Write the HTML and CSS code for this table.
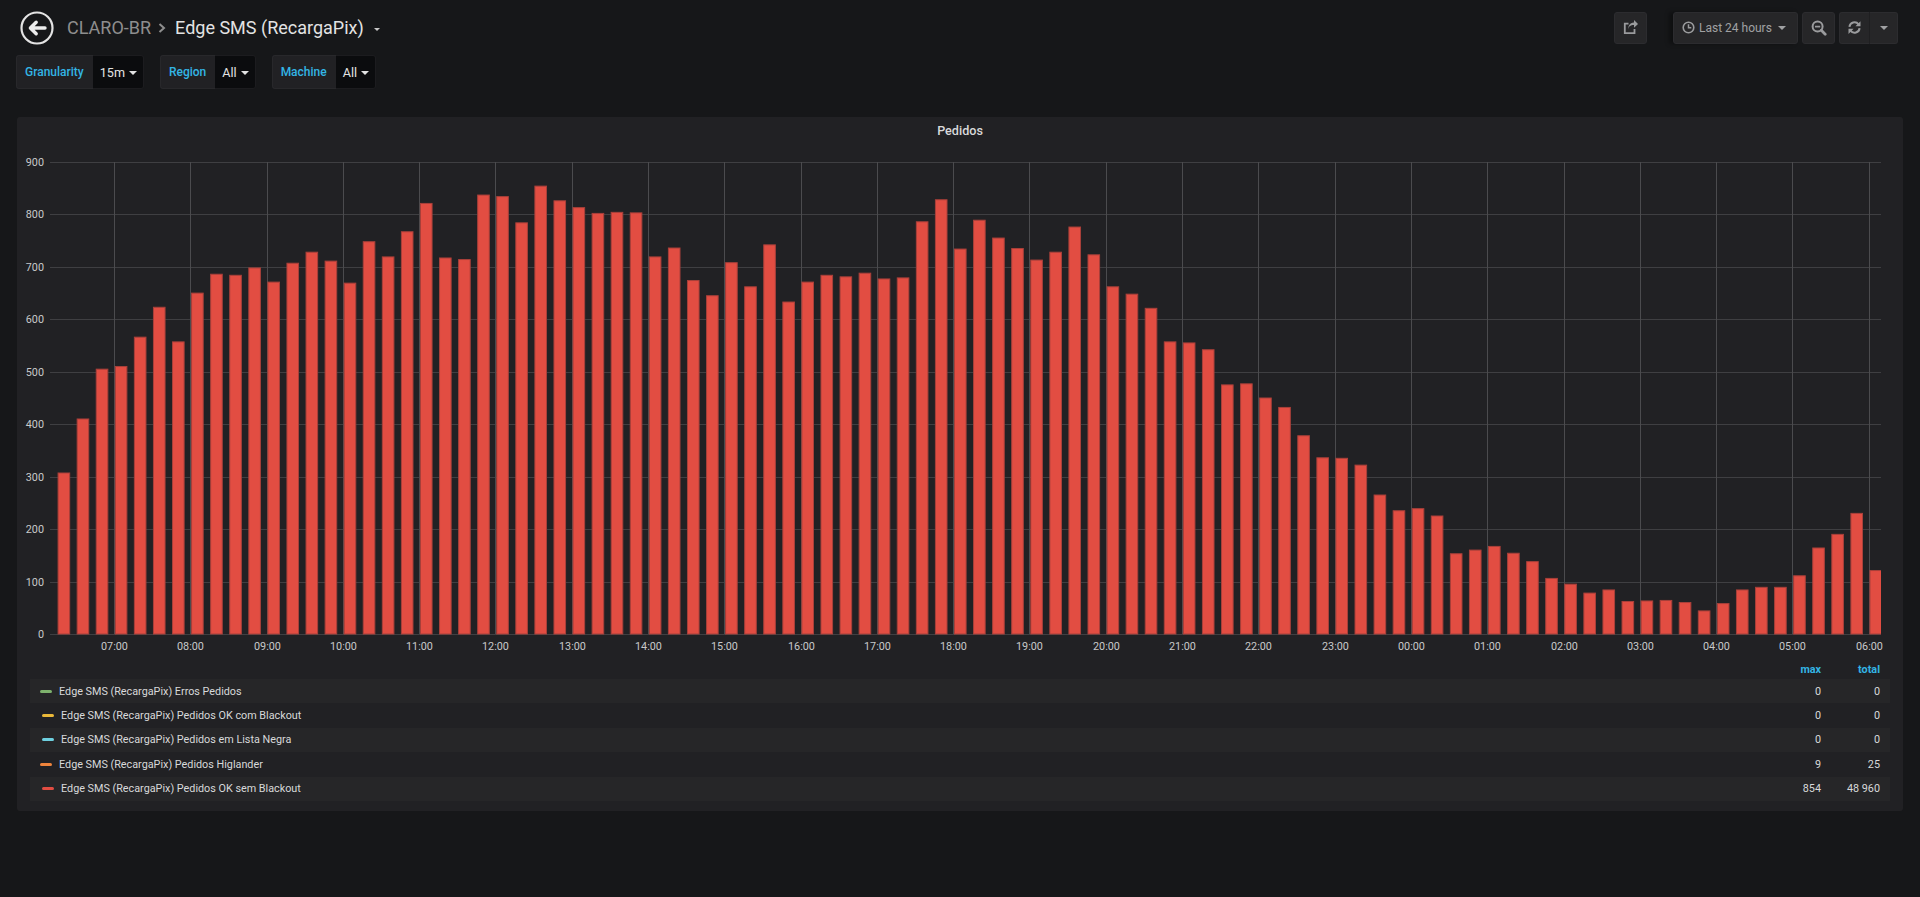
FILE: index.html
```html
<!DOCTYPE html>
<html lang="pt">
<head>
<meta charset="utf-8">
<title>Edge SMS (RecargaPix) - Grafana</title>
<link rel="stylesheet" href="styles.css">
</head>
<body>
<div class="navbar">
  <div class="nav-left">
    <a class="back-btn" href="#">
      <svg width="34" height="34" viewBox="0 0 34 34"><circle cx="17" cy="17" r="15.5" fill="none" stroke="#e3e3e3" stroke-width="2.2"/><path d="M25 17H10.8M16.2 11.2L10.4 17L16.2 22.8" fill="none" stroke="#ececec" stroke-width="3.4" stroke-linecap="round" stroke-linejoin="round"/></svg>
    </a>
    <span class="crumb">CLARO-BR</span>
    <svg class="chev" width="8" height="10" viewBox="0 0 8 10"><path d="M1.5 1L6 5L1.5 9" fill="none" stroke="#8e8e8e" stroke-width="2"/></svg>
    <span class="dash-title">Edge SMS (RecargaPix)</span>
    <span class="caret title-caret"></span>
  </div>
  <div class="nav-right">
    <button class="nbtn icon-btn share">
      <svg width="16" height="15" viewBox="0 0 16 15"><path d="M11.5 9V13.2H1.8V3.6H5.5" fill="none" stroke="#9a9b9d" stroke-width="1.8"/><path d="M5 10.5C5 6.5 7.5 5 11 5V7.8L15 3.9L11 0V2.6C6.5 2.6 5 6.5 5 10.5Z" fill="#9a9b9d"/></svg>
    </button>
    <button class="nbtn timepicker">
      <svg width="13" height="13" viewBox="0 0 13 13"><circle cx="6.5" cy="6.5" r="5.3" fill="none" stroke="#9a9b9d" stroke-width="1.6"/><path d="M6.5 3.3V6.8H9.3" fill="none" stroke="#9a9b9d" stroke-width="1.5"/></svg>
      <span class="tp-text">Last 24 hours</span>
      <span class="caret"></span>
    </button>
    <button class="nbtn icon-btn">
      <svg width="16" height="16" viewBox="0 0 16 16"><circle cx="6.6" cy="6.6" r="5" fill="none" stroke="#9a9b9d" stroke-width="2"/><path d="M10.3 10.3L14.2 14.2" stroke="#9a9b9d" stroke-width="2.8" stroke-linecap="round"/><path d="M4 6.6H9.2" stroke="#9a9b9d" stroke-width="1.7"/></svg>
    </button>
    <div class="btn-group">
      <button class="nbtn refresh">
        <svg width="15" height="15" viewBox="0 0 16 16"><path d="M2.6 7.4A5.4 5.4 0 0 1 12.3 4.6" fill="none" stroke="#9a9b9d" stroke-width="2.1"/><path d="M14.4 1.2V6.6H9Z" fill="#9a9b9d"/><path d="M13.4 8.6A5.4 5.4 0 0 1 3.7 11.4" fill="none" stroke="#9a9b9d" stroke-width="2.1"/><path d="M1.6 14.8V9.4H7Z" fill="#9a9b9d"/></svg>
      </button>
      <button class="nbtn caret-btn"><span class="caret"></span></button>
    </div>
  </div>
</div>

<div class="submenu">
  <div class="var"><span class="var-label">Granularity</span><span class="var-value"><span>15m</span><span class="caret"></span></span></div>
  <div class="var"><span class="var-label">Region</span><span class="var-value"><span>All</span><span class="caret"></span></span></div>
  <div class="var"><span class="var-label">Machine</span><span class="var-value"><span>All</span><span class="caret"></span></span></div>
</div>

<div class="panel">
  <div class="panel-title">Pedidos</div>
  <svg id="chart" class="chart" width="1886" height="515" viewBox="0 0 1886 515"></svg>
  <div class="legend">
    <div class="legend-head"><span></span><span class="lh">max</span><span class="lh">total</span></div>
    <div class="legend-row odd"><div class="series"><i class="swatch green"></i>Edge SMS (RecargaPix) Erros Pedidos</div><div class="val">0</div><div class="val">0</div></div>
    <div class="legend-row shifted"><div class="series"><i class="swatch yellow"></i>Edge SMS (RecargaPix) Pedidos OK com Blackout</div><div class="val">0</div><div class="val">0</div></div>
    <div class="legend-row odd shifted"><div class="series"><i class="swatch cyan"></i>Edge SMS (RecargaPix) Pedidos em Lista Negra</div><div class="val">0</div><div class="val">0</div></div>
    <div class="legend-row"><div class="series"><i class="swatch orange"></i>Edge SMS (RecargaPix) Pedidos Higlander</div><div class="val">9</div><div class="val">25</div></div>
    <div class="legend-row odd shifted"><div class="series"><i class="swatch red"></i>Edge SMS (RecargaPix) Pedidos OK sem Blackout</div><div class="val">854</div><div class="val">48 960</div></div>
  </div>
</div>
<script src="script.js"></script>
</body>
</html>
```

FILE: styles.css
```css
* { box-sizing: border-box; }
html, body { margin: 0; padding: 0; }
body {
  background: #161719;
  color: #d8d9da;
  font-family: Roboto, "Helvetica Neue", Arial, sans-serif;
  width: 1920px;
  height: 897px;
  overflow: hidden;
}
.navbar {
  height: 55px;
  display: flex;
  align-items: center;
  justify-content: space-between;
  padding: 0 22px 0 20px;
}
.nav-left { display: flex; align-items: center; }
.back-btn { display: flex; width: 34px; height: 34px; margin-right: 13px; }
.back-btn svg { display: block; }
.crumb { font-size: 18px; color: #8e8e8e; line-height: 24px; }
.chev { margin: 1px 9px 0 7px; display: block; }
.dash-title { font-size: 18px; color: #e3e3e3; line-height: 24px; }
.caret {
  display: inline-block;
  width: 0; height: 0;
  border-top: 4px solid currentColor;
  border-left: 4px solid transparent;
  border-right: 4px solid transparent;
}
.title-caret { color: #c8c8c8; margin: 4px 0 0 10px; border-top-width: 3px; border-left-width: 3.5px; border-right-width: 3.5px; }
.nav-right { display: flex; align-items: center; }
.nbtn {
  height: 32px;
  background: #262628;
  border: 1px solid #2c2c2f;
  border-radius: 3px;
  color: #9a9b9d;
  font-family: inherit;
  display: flex;
  align-items: center;
  justify-content: center;
  padding: 0;
  cursor: pointer;
}
.nbtn svg { display: block; }
.icon-btn { width: 33px; }
.share { margin-right: 26px; }
.timepicker {
  width: 125px;
  padding: 0 9px 0 8px;
  justify-content: flex-start;
  box-shadow: -4px 0 4px rgba(0, 0, 0, 0.35);
  margin-right: 4px;
}
.tp-text { font-size: 12px; margin: 0 6px 0 4px; color: #a0a1a3; }
.timepicker .caret { color: #a0a1a3; }
.timepicker + .icon-btn { margin-right: 4px; }
.btn-group { display: flex; }
.refresh { width: 31px; border-radius: 3px 0 0 3px; border-right: 1px solid #1f1f21; }
.caret-btn { width: 28px; border-radius: 0 3px 3px 0; border-left: 0; }
.caret-btn .caret { color: #a0a1a3; }

.submenu { display: flex; padding-left: 16px; gap: 16px; }
.var { display: flex; height: 34px; }
.var-label {
  background: #212124;
  border: 1px solid #28282b;
  border-right: 0;
  border-radius: 3px 0 0 3px;
  color: #33b5e5;
  font-size: 12px;
  font-weight: 500;
  padding: 0 9px 0 8px;
  display: flex;
  align-items: center;
}
.var-value {
  background: #0b0c0e;
  border: 1px solid #1c1c1f;
  border-left: 0;
  border-radius: 0 3px 3px 0;
  color: #e3e3e3;
  font-size: 12.6px;
  padding: 0 6px 0 7px;
  display: flex;
  align-items: center;
  gap: 4px;
}
.var-value .caret { color: #e3e3e3; margin-top: 1px; }

.panel {
  margin: 28px 17px 0;
  background: #212124;
  border-radius: 3px;
  padding-bottom: 10px;
}
.panel-title {
  height: 28px;
  line-height: 28px;
  text-align: center;
  font-size: 12.6px;
  font-weight: 500;
  color: #d8d9da;
}
.chart { display: block; }
.chart .hline { stroke: #3f3f42; stroke-width: 1; }
.chart .vline { stroke: #4b4b4e; stroke-width: 1; }
.chart .ylab, .chart .xlab { font-family: Roboto, "Helvetica Neue", Arial, sans-serif; font-size: 10.8px; fill: #c8c9ca; }
.chart .bar { fill: #e24d42; stroke: #a9403a; stroke-width: 1; }

.legend { margin: 0 13px; }
.legend-head, .legend-row {
  display: grid;
  grid-template-columns: 1fr 60px 59px;
  padding-right: 10px;
  font-size: 10.8px;
}
.legend-head { height: 19px; align-items: center; }
.lh { color: #33b5e5; font-weight: 700; text-align: right; }
.legend-row { height: 24.4px; align-items: center; color: #d8d9da; }
.legend-row.odd { background: #262628; }
.series { display: flex; align-items: center; padding-left: 10px; white-space: nowrap; }
.swatch { display: inline-block; width: 12px; height: 3px; border-radius: 1.5px; margin-right: 7px; }
.shifted .series { padding-left: 12px; }
.val { text-align: right; }
.green { background: #7eb26d; }
.yellow { background: #eab839; }
.cyan { background: #6ed0e0; }
.orange { background: #ef843c; }
.red { background: #e24d42; }
```

FILE: script.js
```js
(function () {
  var NS = 'http://www.w3.org/2000/svg';
  var svg = document.getElementById('chart');
  var vals = [
    307, 410, 505, 510, 566, 623, 557, 650, 686, 684, 698, 671, 707, 728, 711, 669,
    748, 719, 767, 821, 717, 714, 837, 834, 784, 854, 826, 813, 802, 804, 803, 719,
    736, 674, 645, 708, 662, 742, 633, 671, 684, 681, 688, 677, 679, 786, 828, 734,
    789, 755, 735, 713, 728, 776, 723, 662, 648, 621, 557, 555, 542, 475, 477, 450,
    432, 378, 336, 335, 322, 265, 235, 239, 225, 153, 160, 167, 154, 138, 106, 95,
    78, 84, 62, 63, 64, 60, 44, 58, 84, 89, 89, 111, 164, 190, 230, 121
  ];
  var L = 33, R = 1864, Y0 = 489, YT = 17, H0 = 97, HW = 76.29, BW = HW / 4;
  var k = (Y0 - YT) / 900;
  function el(name, attrs, parent) {
    var e = document.createElementNS(NS, name);
    for (var a in attrs) e.setAttribute(a, attrs[a]);
    (parent || svg).appendChild(e);
    return e;
  }
  var defs = el('defs', {});
  var cp = el('clipPath', { id: 'plotclip' }, defs);
  el('rect', { x: L, y: 0, width: R - L, height: Y0 + 1 }, cp);

  var grid = el('g', {});
  var labels = el('g', {});
  for (var v = 0; v <= 900; v += 100) {
    var y = Math.round(Y0 - v * k) + 0.5;
    el('line', { x1: L, x2: R, y1: y, y2: y, 'class': 'hline' }, grid);
    var t = el('text', { x: 27, y: (y + 3.8).toFixed(1), 'class': 'ylab', 'text-anchor': 'end' }, labels);
    t.textContent = String(v);
  }
  for (var h = 0; h < 24; h++) {
    var x = Math.round(H0 + h * HW) + 0.5;
    el('line', { x1: x, x2: x, y1: YT, y2: Y0, 'class': 'vline' }, grid);
    var hr = (7 + h) % 24;
    var t2 = el('text', { x: x, y: 505, 'class': 'xlab', 'text-anchor': 'middle' }, labels);
    t2.textContent = (hr < 10 ? '0' : '') + hr + ':00';
  }
  var bars = el('g', { 'clip-path': 'url(#plotclip)' });
  vals.forEach(function (val, i) {
    var bx = H0 + (i - 3) * BW + 1.3;
    var bh = val * k;
    el('rect', { x: bx.toFixed(2), y: (Y0 - bh).toFixed(2), width: 11.6, height: bh.toFixed(2), 'class': 'bar' }, bars);
  });
})();
```
